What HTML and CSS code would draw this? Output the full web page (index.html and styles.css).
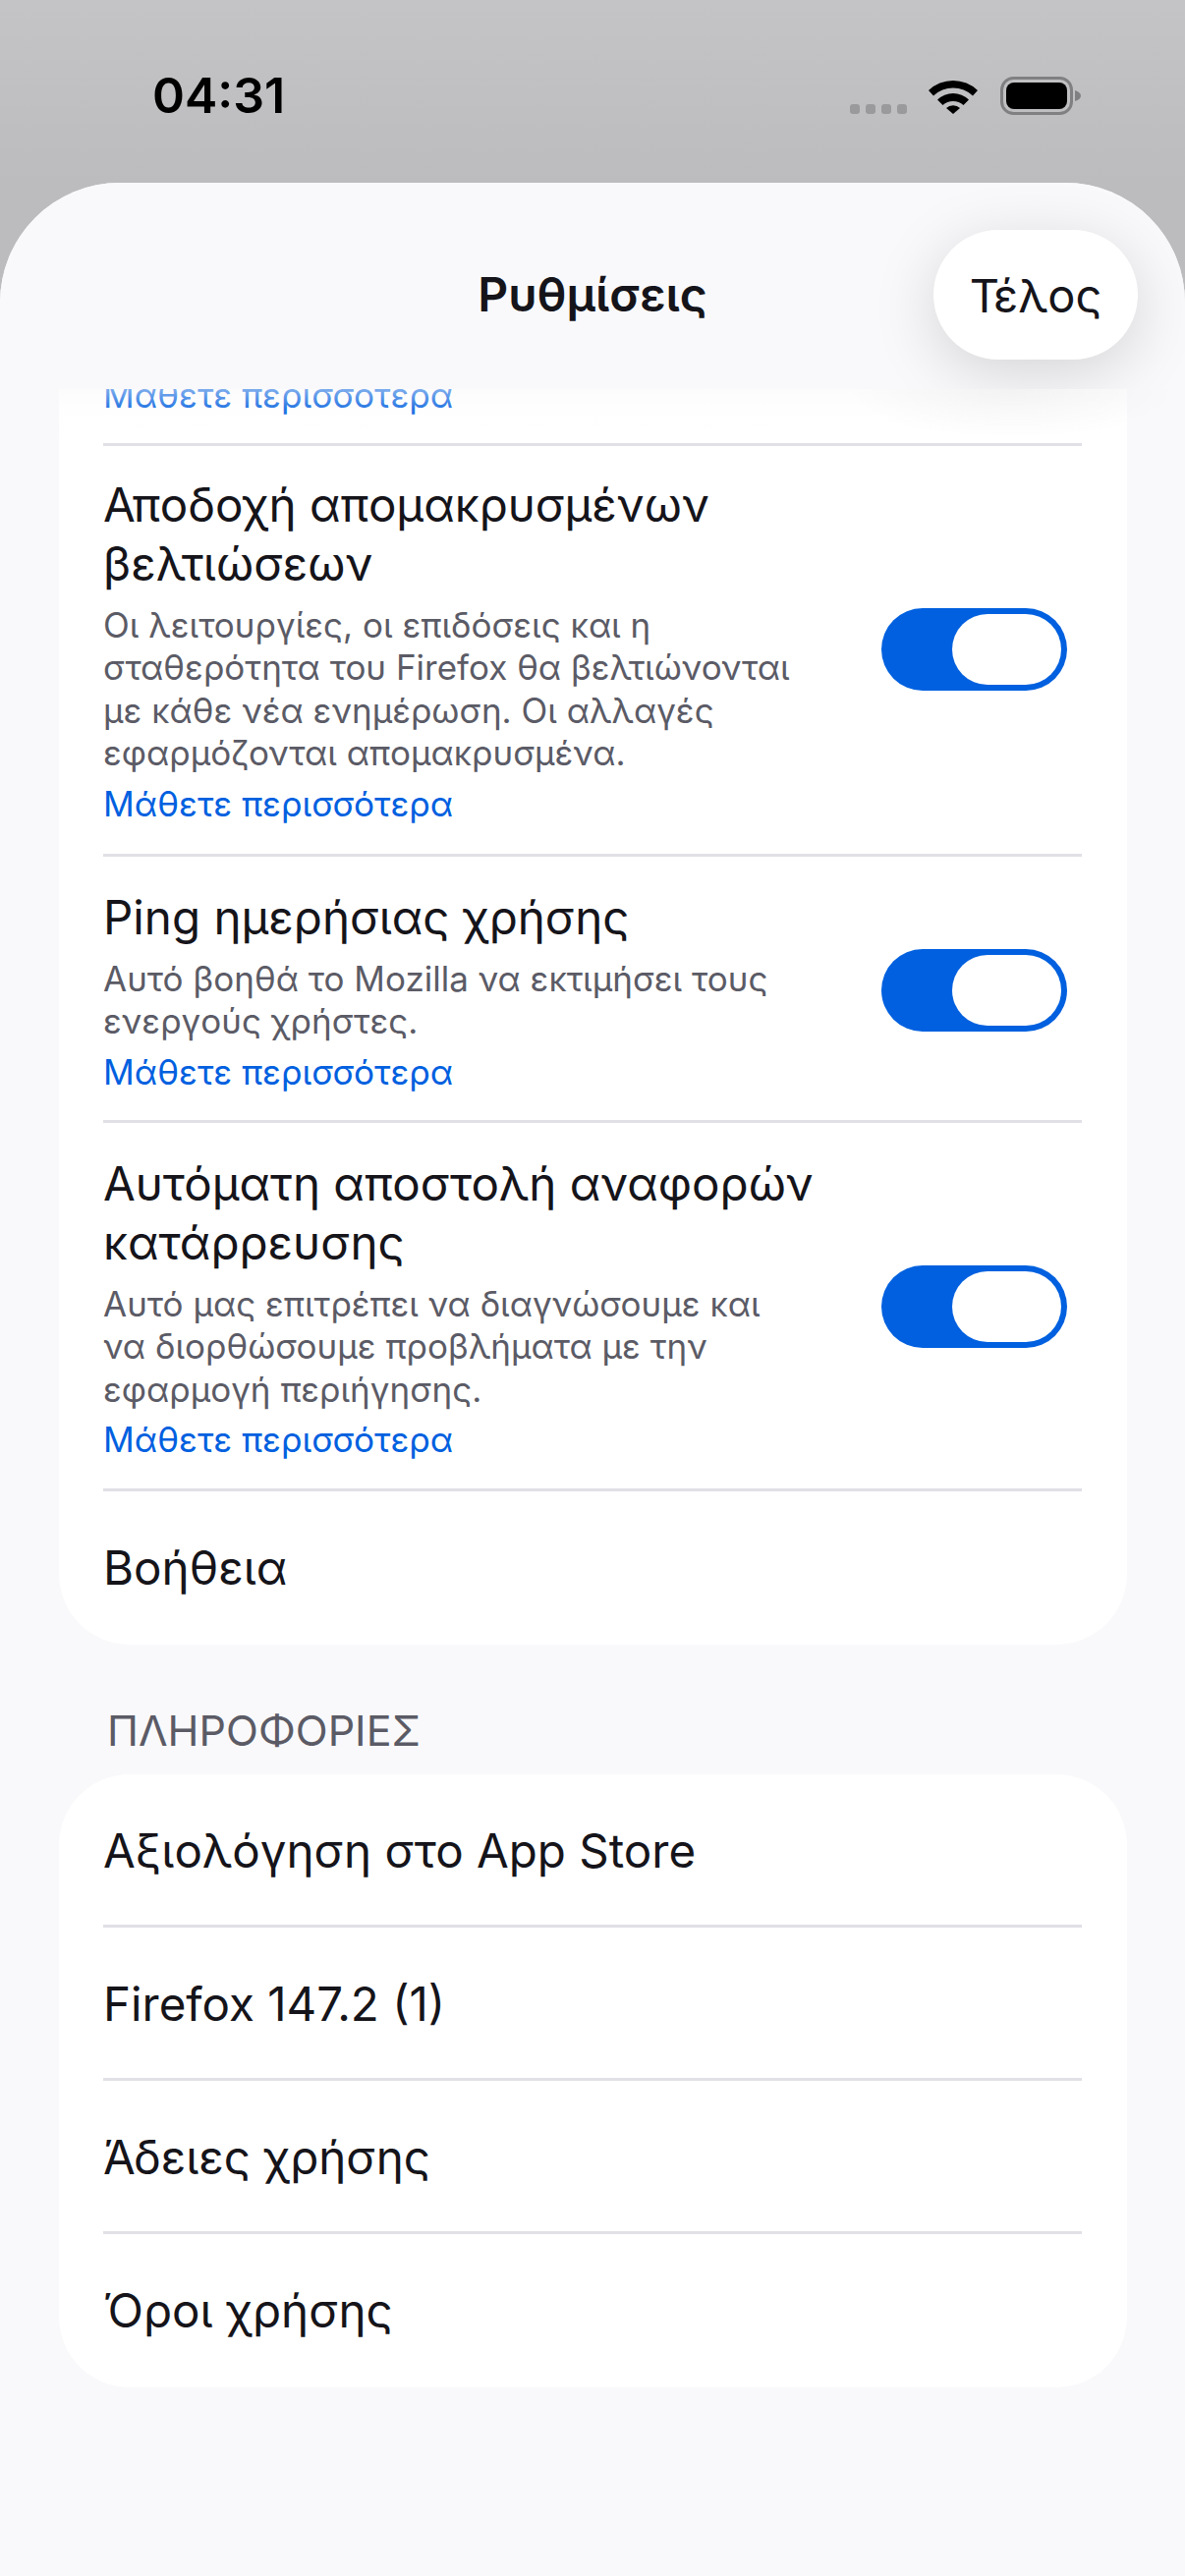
FILE: index.html
```html
<!DOCTYPE html>
<html lang="el">
<head>
  <meta charset="UTF-8">
  <meta name="viewport" content="width=device-width, initial-scale=1.0">
  <title>Ρυθμίσεις</title>
  <link rel="stylesheet" href="styles.css">
</head>
<body>
  <div class="status-bar">
    <span class="time">04:31</span>
    <div class="status-icons">
      <div class="signal"><i></i><i></i><i></i><i></i></div>
      <svg class="wifi" width="50" height="37" viewBox="0 0 50 37">
        <path d="M0 13 A36 36 0 0 1 50 13 L45 18.5 A29 29 0 0 0 5 18.5 Z"/>
        <path d="M9 22.500 A23 23 0 0 1 41 22.500 L35.500 28 A15.500 15.500 0 0 0 14.500 28 Z"/>
        <path d="M18 31 A10 10 0 0 1 32 31 L25 37 Z"/>
      </svg>
      <svg class="battery" width="82" height="39" viewBox="0 0 82 39">
        <rect x="1.500" y="1.500" width="71" height="36" rx="12" fill="none" stroke="#808082" stroke-width="3"/>
        <rect x="6" y="6" width="62" height="27" rx="8"/>
        <path d="M76 14 Q82 16 82 19.500 Q82 23 76 25 Z" fill="#808082"/>
      </svg>
    </div>
  </div>

  <div class="sheet">
    <header class="sheet-header">
      <h1>Ρυθμίσεις</h1>
      <button class="done">Τέλος</button>
    </header>
    <div class="header-fade"></div>

    <main class="content">
      <section class="card">
        <div class="row row-clipped">
          <a class="learn">Μάθετε περισσότερα</a>
        </div>
        <div class="row row-toggle">
          <div class="row-text">
            <div class="row-title">Αποδοχή απομακρυσμένων βελτιώσεων</div>
            <p class="row-desc">Οι λειτουργίες, οι επιδόσεις και η σταθερότητα του Firefox θα βελτιώνονται με κάθε νέα ενημέρωση. Οι αλλαγές εφαρμόζονται απομακρυσμένα.</p>
            <a class="learn">Μάθετε περισσότερα</a>
          </div>
          <div class="toggle"><span class="thumb"></span></div>
        </div>
        <div class="row row-toggle">
          <div class="row-text">
            <div class="row-title">Ping ημερήσιας χρήσης</div>
            <p class="row-desc">Αυτό βοηθά το Mozilla να εκτιμήσει τους ενεργούς χρήστες.</p>
            <a class="learn">Μάθετε περισσότερα</a>
          </div>
          <div class="toggle"><span class="thumb"></span></div>
        </div>
        <div class="row row-toggle">
          <div class="row-text">
            <div class="row-title">Αυτόματη αποστολή αναφορών κατάρρευσης</div>
            <p class="row-desc">Αυτό μας επιτρέπει να διαγνώσουμε και να διορθώσουμε προβλήματα με την εφαρμογή περιήγησης.</p>
            <a class="learn">Μάθετε περισσότερα</a>
          </div>
          <div class="toggle"><span class="thumb"></span></div>
        </div>
        <div class="row row-plain"><div class="row-title">Βοήθεια</div></div>
      </section>

      <h2 class="section-label">ΠΛΗΡΟΦΟΡΙΕΣ</h2>

      <section class="card">
        <div class="row row-plain"><div class="row-title">Αξιολόγηση στο App Store</div></div>
        <div class="row row-plain"><div class="row-title">Firefox 147.2 (1)</div></div>
        <div class="row row-plain"><div class="row-title">Άδειες χρήσης</div></div>
        <div class="row row-plain"><div class="row-title">Όροι χρήσης</div></div>
      </section>
    </main>
  </div>
</body>
</html>
```

FILE: styles.css
```css
* {
  box-sizing: border-box;
}
html, body {
  margin: 0;
  height: 2622px;
  overflow: hidden;
}
body {
  font-family: Inter, "Noto Sans", sans-serif;
  background: linear-gradient(#c4c4c6, #bcbcbe 186px);
  color: #15141a;
}

/* status bar */
.status-bar {
  height: 186px;
  display: flex;
  justify-content: space-between;
  align-items: flex-start;
  padding: 67px 106px 0 155px;
}
.time {
  font-size: 50px;
  line-height: 60px;
  font-weight: 600;
  color: #000;
}
.status-icons {
  display: flex;
  align-items: flex-start;
  margin-top: 11px;
}
.signal {
  display: flex;
  gap: 6px;
  margin: 28px 22px 0 0;
}
.signal i {
  width: 10px;
  height: 10px;
  border-radius: 3px;
  background: #9a9a9c;
}
.wifi {
  margin: 1px 23px 0 0;
}

/* sheet */
.sheet {
  position: relative;
  height: 2436px;
  background: #f9f9fb;
  border-radius: 122px 122px 0 0;
  overflow: hidden;
}
.sheet-header {
  position: absolute;
  top: 0;
  left: 0;
  right: 0;
  height: 210px;
  background: #f9f9fb;
  overflow: hidden;
  z-index: 2;
}
.sheet-header h1 {
  margin: 0;
  text-align: center;
  font-size: 48px;
  line-height: 60px;
  font-weight: 600;
  padding-top: 84px;
}
.done {
  position: absolute;
  top: 48px;
  right: 48px;
  width: 208px;
  height: 132px;
  border: 0;
  border-radius: 66px;
  background: #fff;
  font-family: inherit;
  font-size: 47px;
  color: #15141a;
  box-shadow: 0 14px 64px rgba(0, 0, 0, 0.15);
}
.header-fade {
  position: absolute;
  top: 210px;
  left: 0;
  right: 0;
  height: 50px;
  background:
    radial-gradient(ellipse 170px 50px at 1030px 0, rgba(0, 0, 0, 0.04), rgba(0, 0, 0, 0)),
    linear-gradient(rgba(249, 249, 251, 0.5), rgba(249, 249, 251, 0.15) 40%, rgba(249, 249, 251, 0));
  z-index: 1;
}

/* list */
.content {
  padding: 100px 59px 0 60px;
}
.card {
  background: #fff;
  border-radius: 72px;
  padding: 0 46px 0 45px;
}
.row + .row {
  border-top: 3px solid #e0e0e6;
}
.row-clipped {
  height: 165px;
  padding-top: 91px;
}
.row-clipped .learn {
  margin-top: 0;
}
.row-toggle {
  display: flex;
  align-items: center;
  justify-content: space-between;
  padding: 31.5px 15px 23.5px 0;
}
.row-clipped + .row-toggle {
  padding-top: 29.5px;
  padding-bottom: 25.5px;
}
.row-text {
  width: 750px;
}
.row-title {
  font-size: 47.5px;
  line-height: 60px;
}
.row-desc {
  margin: 11px 0 0;
  max-width: 715px;
  font-size: 35px;
  line-height: 43.5px;
  color: #5b5b66;
}
.learn {
  display: block;
  margin-top: 4px;
  font-size: 35.2px;
  line-height: 51px;
  color: #0060df;
}
.row-plain {
  padding: 48.5px 0 44.5px;
}
.row-plain:last-child {
  padding-bottom: 47.5px;
}
.section-label {
  margin: 0;
  padding: 62px 0 0 49px;
  height: 132px;
  font-size: 43px;
  line-height: 50px;
  font-weight: 400;
  color: #5b5b66;
}
.toggle {
  width: 189px;
  height: 84px;
  margin-bottom: 5px;
  padding: 6px;
  border-radius: 42px;
  background: #0060df;
  display: flex;
  justify-content: flex-end;
  flex: none;
}
.thumb {
  width: 111px;
  height: 72px;
  border-radius: 36px;
  background: #fff;
}
```
